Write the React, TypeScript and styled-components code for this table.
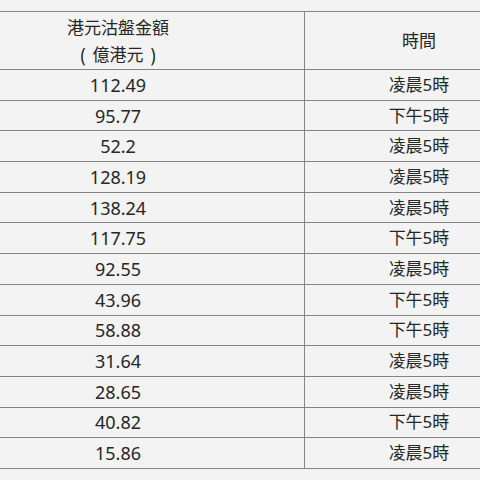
import { createGlobalStyle } from "styled-components";
import styled from "styled-components";

const GlobalStyle = createGlobalStyle`
    html, body {
        margin: 0;
        padding: 0;
        background: #f3f3f3;
        overflow: hidden;
    }
    body {
        width: 480px;
        height: 480px;
    }
`;

const Sheet = styled.div`
    padding-top: 11px;
    margin-left: -69px;
    font-family: "Noto Sans", "Noto Sans CJK TC", sans-serif;
    color: #262626;
`;

const Table = styled.table`
    border-collapse: collapse;
    table-layout: fixed;
    width: 600px;
`;

const HeadCell = styled.th<{ $width: number }>`
    width: ${(p) => p.$width}px;
    height: 57px;
    padding: 0;
    border: 1px solid #858585;
    font-weight: normal;
    font-size: 17px;
    line-height: 27px;
    text-align: center;
    vertical-align: middle;
`;

const Paren = styled.span`
    display: inline-block;
    transform: scaleY(1.2);
    margin: 0 7px;
`;

const Cell = styled.td<{ $numeric?: boolean }>`
    height: 30.7px;
    padding: 0;
    border: 1px solid #858585;
    font-size: ${(p) => (p.$numeric ? 18 : 17)}px;
    line-height: 20px;
    text-align: center;
    vertical-align: middle;
    box-sizing: border-box;
`;

const rows: [string, string][] = [
    ["112.49", "凌晨5時"],
    ["95.77", "下午5時"],
    ["52.2", "凌晨5時"],
    ["128.19", "凌晨5時"],
    ["138.24", "凌晨5時"],
    ["117.75", "下午5時"],
    ["92.55", "凌晨5時"],
    ["43.96", "下午5時"],
    ["58.88", "下午5時"],
    ["31.64", "凌晨5時"],
    ["28.65", "凌晨5時"],
    ["40.82", "下午5時"],
    ["15.86", "凌晨5時"],
];

const App = () => {
    return (
        <>
            <GlobalStyle />
            <Sheet>
                <Table>
                    <thead>
                        <tr>
                            <HeadCell $width={372}>
                                港元沽盤金額
                                <br />
                                <Paren>(</Paren>億港元<Paren>)</Paren>
                            </HeadCell>
                            <HeadCell $width={228}>時間</HeadCell>
                        </tr>
                    </thead>
                    <tbody>
                        {rows.map(([amount, time], index) => (
                            <tr key={`row${index}`}>
                                <Cell $numeric>{amount}</Cell>
                                <Cell>{time}</Cell>
                            </tr>
                        ))}
                    </tbody>
                </Table>
            </Sheet>
        </>
    );
};

export default App;
